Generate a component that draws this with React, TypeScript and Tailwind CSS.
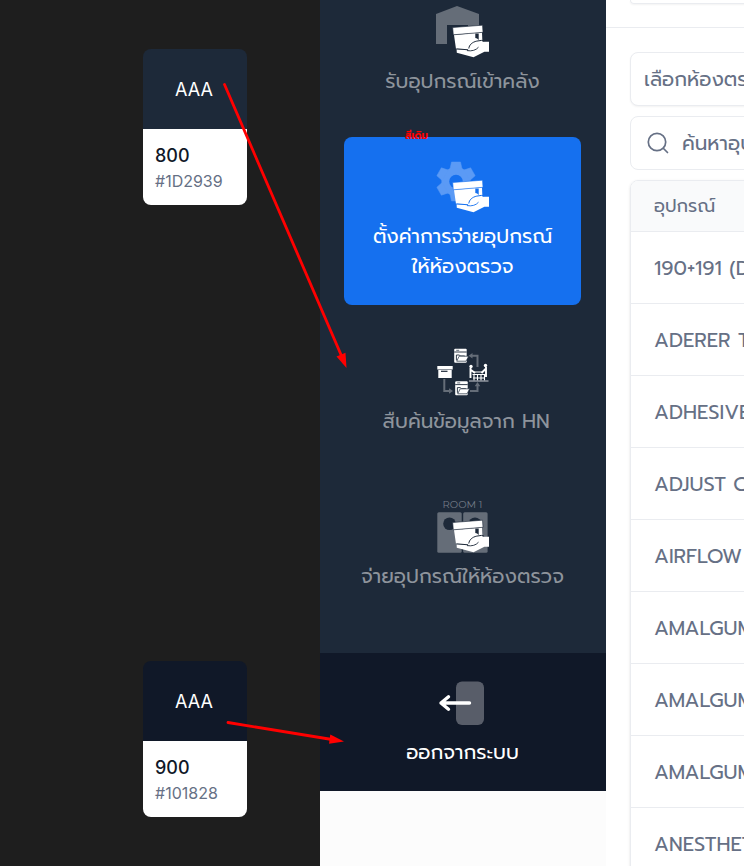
import React from "react";

const thai = "font-['Prompt','Noto_Sans_Thai','Noto_Sans',sans-serif]";

function Swatch({ shade, hex, tone }: { shade: string; hex: string; tone: string }) {
  return (
    <section className="w-[104px] font-['Inter',sans-serif]">
      <div className={`flex h-20 items-center justify-center rounded-t-lg pt-px pr-0.5 text-lg text-white ${tone}`}>AAA</div>
      <div className="flex h-[76px] flex-col rounded-b-lg bg-white px-3 pt-[14px]">
        <h3 className="text-lg leading-[26px] font-medium text-[#101828]">{shade}</h3>
        <p className="text-base leading-6 text-[#667085]">{hex}</p>
      </div>
    </section>
  );
}

function BoxInHand({ gap }: { gap: string }) {
  return (
    <g>
      <path d="M18 29 46 26.600 46.400 36 38 40 33 44 20 43Z" fill="#fff" />
      <path d="M16.700 21.500 46.500 19.200 47 26.300 17.300 28.800Z" fill="#fff" stroke={gap} strokeWidth="0.600" />
      <path d="M39.300 27.600h3.400v6.400l-1.600-1.500-1.800-.600Z" fill={gap} />
      <path
        d="M20.600 43.300 32.800 44.200c.400-4 3.600-7.200 8-8.200l4.700-.800 2.500.600H53v10h-4.600L37.500 51.200 20.800 46.700Z"
        fill="#fff"
        strokeLinejoin="round"
      />
      <path d="M20.300 42.800 32 43.800M32.800 42.500c.400-3.600 3.400-6.400 8-7.400l4.700-.700 2.600.700" fill="none" stroke={gap} strokeWidth="1" />
      <path d="M31 44.600c5 .800 9-.400 11.500-3.400" fill="none" stroke={gap} strokeWidth="0.900" />
    </g>
  );
}

function Icon({ children }: { children: React.ReactNode }) {
  return (
    <svg viewBox="0 0 53 52" className="h-[52px] w-[53px] overflow-visible" aria-hidden="true">
      {children}
    </svg>
  );
}

const WarehouseIcon = () => (
  <Icon>
    <path d="M0 8 21 0 43 8V38H32V34H15V38H11V38H0ZM11 19V38H15V34H32V19Z" fill="#656d78" fillRule="evenodd" />
    <BoxInHand gap="#1d2939" />
  </Icon>
);

const GearIcon = () => (
  <Icon>
    <g fill="#5b9af5">
      <circle cx="20" cy="20.500" r="14.500" />
      {[0, 60, 120, 180, 240, 300].map((angle) => (
        <path key={angle} d="M15.500 1h9l1.500 7h-12Z" transform={`rotate(${angle} 20 20.500)`} strokeLinejoin="round" stroke="#5b9af5" strokeWidth="0.500" />
      ))}
    </g>
    <circle cx="20" cy="20.500" r="6.800" fill="#1570ef" />
    <BoxInHand gap="#1570ef" />
  </Icon>
);

function FolderGlyph({ x, y }: { x: number; y: number }) {
  return (
    <g transform={`translate(${x} ${y})`}>
      <rect width="12.500" height="14" rx="1" fill="#fff" />
      <path d="M0 3.300h12.500" stroke="#1d2939" strokeWidth="0.900" />
      <path d="M2 1.600h3" stroke="#1d2939" strokeWidth="0.700" />
      <path d="M2.200 11.500V6.300h3l1 1h4.300v1.500" fill="none" stroke="#1d2939" strokeWidth="0.900" />
      <path d="M5 7.500h9.500L11.800 12.500H2.500Z" fill="#fff" stroke="#1d2939" strokeWidth="0.700" />
    </g>
  );
}

const FlowIcon = () => (
  <Icon>
    <g fill="none" stroke="#656d78" strokeWidth="2">
      <path d="M36 9.800h5.500V21M8.300 33v12h6M34 45h7.500v-6" />
    </g>
    <path d="m32.500 9.800 4-2.800v5.600ZM17 45l-4-2.800v5.600ZM41.500 36l-2.800 4.200h5.600Z" fill="#656d78" />
    <FolderGlyph x={18.2} y={2.700} />
    <FolderGlyph x={19.2} y={35.300} />
    <path d="M1.300 20h15.400v3.400H1.300ZM2.300 24h13.400v8H2.300Z" fill="#fff" />
    <path d="M5 25.300h6.500" stroke="#1d2939" strokeWidth="1.200" />
    <circle cx="35" cy="20.500" r="1.700" fill="#fff" />
    <circle cx="49.500" cy="19.500" r="1.700" fill="#fff" />
    <path d="M34.500 22v10M50 21v10M35 24l4 3M49.500 23l-4 4" fill="none" stroke="#fff" strokeWidth="1.900" />
    <path d="M36.500 28.500h13M38 26h8M38 28v6.500M41.500 28v6.500M45 28v6.500M48.500 28v6.500M37 32h12" fill="none" stroke="#fff" strokeWidth="1.100" />
    <path d="M33 35h19.500" stroke="#a5a9b0" strokeWidth="1.300" />
  </Icon>
);

const RoomIcon = () => (
  <Icon>
    <text x="26.500" y="7" textAnchor="middle" fontSize="10" fill="#747c87" className="font-['Montserrat','Inter',sans-serif]">
      ROOM 1
    </text>
    <rect x="1.300" y="11.300" width="24.400" height="40.500" rx="1.500" fill="#656d78" />
    <rect x="27.200" y="11.300" width="24.400" height="40.500" rx="1.500" fill="#656d78" />
    <circle cx="13.500" cy="22.700" r="6.300" fill="#1d2939" />
    <circle cx="39" cy="22.700" r="6.300" fill="#1d2939" />
    <BoxInHand gap="#1d2939" />
  </Icon>
);

const ExitIcon = () => (
  <Icon>
    <rect x="20" y="4.500" width="28" height="43.500" rx="6" fill="#585d69" />
    <path d="M33.500 26H5M12.500 19.800 5 26l7.500 6.200" fill="none" stroke="#fff" strokeWidth="3.400" strokeLinecap="round" strokeLinejoin="round" />
  </Icon>
);

function NavItem({ icon, tone, children }: { icon: React.ReactNode; tone: string; children: React.ReactNode }) {
  return (
    <button type="button" className={`flex w-full flex-col items-center gap-2 rounded-lg py-6 text-xl leading-[30px] whitespace-nowrap ${tone}`}>
      {icon}
      <span>{children}</span>
    </button>
  );
}

const items = [
  "190+191 (DENTAL)",
  "ADERER TIP",
  "ADHESIVE",
  "ADJUST CHAIR",
  "AIRFLOW",
  "AMALGUM",
  "AMALGUM",
  "AMALGUM",
  "ANESTHETIC",
];

export default function App() {
  return (
    <div className={`relative flex h-screen overflow-hidden bg-[#fcfcfc] ${thai}`}>
      <aside className="flex w-80 shrink-0 flex-col items-end justify-between bg-[#1e1e1e] pt-[49px] pr-[73px] pb-[49px]">
        <Swatch shade="800" hex="#1D2939" tone="bg-[#1d2939]" />
        <Swatch shade="900" hex="#101828" tone="bg-[#101828]" />
      </aside>

      <nav className="w-[286px] shrink-0">
        <div className="-mt-[18px] flex flex-col gap-[17px] bg-[#1d2939] px-6 pr-[25px] pb-[38px]">
          <NavItem icon={<WarehouseIcon />} tone="text-[#8e949c]">รับอุปกรณ์เข้าคลัง</NavItem>
          <div className="relative">
            <NavItem icon={<GearIcon />} tone="bg-[#1570ef] text-white">
              ตั้งค่าการจ่ายอุปกรณ์
              <br />
              ให้ห้องตรวจ
            </NavItem>
            <span className="absolute -top-[9px] left-[61px] text-[10px] leading-4 font-bold text-[#ff0000]">สีเดิม</span>
          </div>
          <NavItem icon={<FlowIcon />} tone="text-[#8e949c]">{"\u00a0สืบค้นข้อมูลจาก HN"}</NavItem>
          <NavItem icon={<RoomIcon />} tone="text-[#8e949c]">จ่ายอุปกรณ์ให้ห้องตรวจ</NavItem>
        </div>
        <div className="bg-[#101828] px-6 pr-[25px]">
          <NavItem icon={<ExitIcon />} tone="text-white">ออกจากระบบ</NavItem>
        </div>
      </nav>

      <main className="min-w-0 flex-1 overflow-hidden bg-white text-[#667085]">
        <div className="min-w-[480px]">
          <header className="h-7 border-b border-[#eaecf0] px-6">
            <div className="h-1 rounded-b-lg border border-t-0 border-[#eaecf0] shadow-xs" />
          </header>
          <div className="flex flex-col gap-[10px] px-6 pt-6">
            <select
              aria-label="เลือกห้องตรวจ"
              className="h-[54px] w-full appearance-none rounded-lg border border-[#eaecf0] bg-white px-[13px] text-xl shadow-xs"
            >
              <option>เลือกห้องตรวจ</option>
            </select>
            <label className="flex h-[54px] items-center gap-[11px] rounded-lg border border-[#eaecf0] px-4">
              <svg viewBox="0 0 24 24" className="size-6 shrink-0" fill="none" stroke="#667085" strokeWidth="1.700" strokeLinecap="round" aria-hidden="true">
                <circle cx="10" cy="11" r="8.700" />
                <path d="m16.500 17.500 4 4" />
              </svg>
              <input
                type="search"
                aria-label="ค้นหาอุปกรณ์"
                placeholder="ค้นหาอุปกรณ์"
                className="min-w-0 flex-1 text-xl outline-none placeholder:text-[#667085]"
              />
            </label>
            <div className="overflow-hidden rounded-lg border border-[#eaecf0] shadow-sm">
              <table className="w-full border-collapse text-left">
                <thead>
                  <tr className="h-[50px] border-b border-[#eaecf0] bg-[#f9fafb]">
                    <th className="px-[23px] py-0 text-lg font-normal">อุปกรณ์</th>
                  </tr>
                </thead>
                <tbody>
                  {items.map((name, i) => (
                    <tr key={i} className="h-[72px] border-b border-[#eaecf0]">
                      <td className="px-[23px] pt-0.5 pb-0 text-xl whitespace-nowrap">{name}</td>
                    </tr>
                  ))}
                </tbody>
              </table>
            </div>
          </div>
        </div>
      </main>

      <svg className="pointer-events-none absolute top-0 left-0 h-[866px] w-[360px]" viewBox="0 0 360 866" aria-hidden="true">
        <g stroke="#f00" strokeWidth="2.800" strokeLinecap="round">
          <path d="M224.500 84.500 342 357" />
          <path d="M228 722.500 332 739.500" />
        </g>
        <g fill="#f00">
          <path d="M346.500 368 336.500 356.500 345.500 352.800Z" />
          <path d="M344 741.500 329 743.800 330.300 734.500Z" />
        </g>
      </svg>
    </div>
  );
}
